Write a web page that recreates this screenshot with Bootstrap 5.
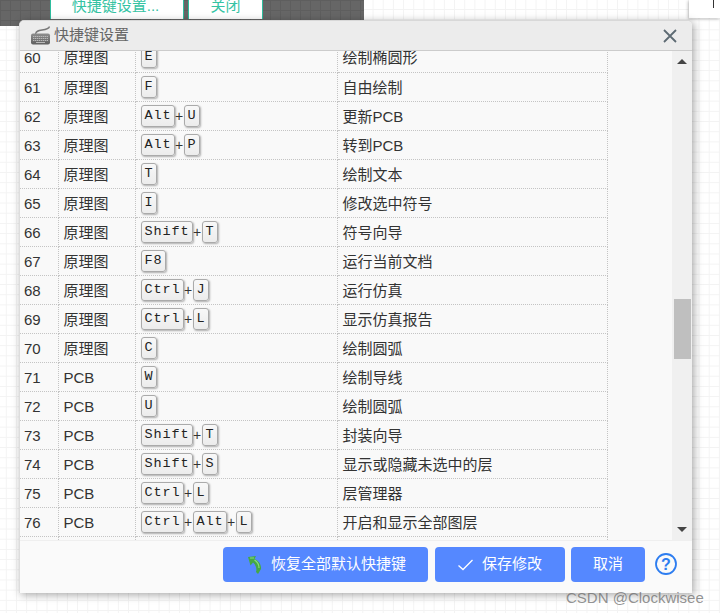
<!DOCTYPE html>
<html lang="zh">
<head>
<meta charset="utf-8">
<title>快捷键设置</title>
<link href="https://cdn.jsdelivr.net/npm/bootstrap@5.3.0/dist/css/bootstrap.min.css" rel="stylesheet">
<style>
html,body{width:720px;height:613px;overflow:hidden;margin:0;}
body{font-family:"Liberation Sans","Noto Sans CJK SC",sans-serif;background-color:#fff;
  background-image:linear-gradient(#f3f3f3 1px,transparent 1px),linear-gradient(90deg,#f3f3f3 1px,transparent 1px);
  background-size:10.2px 10.2px;background-position:5.8px 9px;}
.stage{width:720px;height:613px;position:relative;}
.dark-strip{width:364px;height:26px;background-color:#666;
  background-image:linear-gradient(#5e5e5e 1px,transparent 1px),linear-gradient(90deg,#5e5e5e 1px,transparent 1px);
  background-size:10px 10px;padding-left:50px;gap:4px;align-items:flex-start;}
.strip-tab{height:19px;background:#fff;border-left:1px solid #2ebd9e;border-right:1px solid #2ebd9e;color:#35c3a3;font-size:15px;line-height:11px;overflow:hidden;justify-content:center;}
.tab-one{width:134px;padding-right:3px;}
.tab-two{width:75px;}
.corner-box{position:absolute;left:689px;top:0;width:31px;height:18px;background:#fff;box-shadow:-1px 1px 3px rgba(0,0,0,.25);}
.corner-box i{display:block;width:1px;height:8px;background:#333;margin-left:24px;}
.dialog-win{position:absolute;left:19px;top:20px;width:673px;height:573px;background:#fafafa;border-radius:5px 5px 0 0;border-top:1px solid #d8d8d8;border-left:1px solid #ddd;box-shadow:2px 2px 8px rgba(0,0,0,.35);overflow:hidden;}
.title-bar{height:30px;background:#ececec;border-bottom:1px solid #ccc;padding-left:10px;color:#666;font-size:15px;}
.title-bar .kb-icon{margin-right:3px;}
.title-bar .close-x{margin-left:auto;margin-right:15px;}
.body-zone{height:489px;}
.table-pane{width:652px;overflow:hidden;background:#f9f9f9;}
.key-grid{table-layout:fixed;width:589px;margin:-8px 0 0 -1px;border-collapse:collapse;color:#333;font-size:15px;--bs-table-bg:transparent;}
.key-grid td{height:29px;padding:2px 5px 0;border:1px dotted #c4c4c4;border-top:0;vertical-align:middle;line-height:20px;white-space:nowrap;box-shadow:none;background:transparent;}
.key-grid td:first-child{border-left:0;}
.c-num{width:39px;color:#444;}
.c-kind{width:77px;}
.c-keys{width:202px;}
.k{display:inline-block;box-sizing:border-box;font-family:"Liberation Mono",monospace;font-size:13.5px;letter-spacing:.9px;line-height:20px;height:22px;min-width:16px;padding:0 2px 0 3px;text-align:center;color:#222;background:linear-gradient(#f8f8f8,#ececec);border:1px solid #aaa;border-radius:3px;box-shadow:1px 1px 2px rgba(0,0,0,.3);vertical-align:middle;position:relative;top:-1px;}
.k-plus{display:inline-block;width:9px;text-align:center;font-size:14px;color:#333;vertical-align:middle;position:relative;top:-1px;}
.scroll-rail{width:20px;background:#f0f0f0;flex:none;}
.thumb{width:17px;height:60px;background:#bfbfbf;margin:0 auto 0 2px;}
.arrow-up{width:0;height:0;border:5px solid transparent;border-top:0;border-bottom:5px solid #444;margin:8px auto 0 5px;}
.arrow-down{width:0;height:0;border:5px solid transparent;border-bottom:0;border-top:5px solid #444;margin:0 auto 8px 5px;}
.gap-a{height:235px;}
.foot-bar{height:53px;background:#fafafa;border-top:1px solid #efefef;padding:6px 15px 0 0;justify-content:flex-end;align-items:flex-start;gap:6px;}
.act-btn{height:35px;padding:0;background:#5588ff;border:0;border-radius:4px;color:#fff;font-size:15px;justify-content:center;gap:9px;}
.act-btn:hover{background:#5588ff;color:#fff;}
.btn-w1{width:205px;margin-right:1px;padding-left:3px;}
.btn-w2{width:130px;}
.btn-w3{width:74px;}
.help-mark{margin-left:4px;margin-top:6px;}
.wm{position:absolute;left:566px;top:589px;font-size:15px;color:rgba(100,100,100,.7);line-height:18px;white-space:nowrap;}
</style>
</head>
<body>
<div class="stage">
  <div class="dark-strip d-flex">
    <div class="strip-tab tab-one d-flex">快捷键设置...</div>
    <div class="strip-tab tab-two d-flex">关闭</div>
  </div>
  <div class="corner-box"><i></i></div>

  <div class="dialog-win d-flex flex-column">
    <div class="title-bar d-flex align-items-center">
      <svg class="kb-icon" width="21" height="19" viewBox="0 0 21 19">
        <defs><linearGradient id="kb" x1="0" y1="0" x2="0" y2="1"><stop offset="0" stop-color="#8e8e8e"/><stop offset="1" stop-color="#5f5f5f"/></linearGradient></defs>
        <path d="M19.500 .5C19 3 16 3.500 12 4S6 5 5.500 8" fill="none" stroke="#777" stroke-width="1.300"/>
        <rect x="1" y="7.500" width="19" height="11" rx="2" fill="url(#kb)"/>
        <path d="M3 10.500h15M3 12.500h15M3 14.500h15" stroke="#b9b9b9" stroke-width="1.100" stroke-dasharray="1.400 .6"/>
        <path d="M6 16.500h9" stroke="#b9b9b9" stroke-width="1"/>
      </svg>
      <span>快捷键设置</span>
      <svg class="close-x" width="14" height="14" viewBox="0 0 14 14"><path d="M1 1l12 12M13 1L1 13" stroke="#5d6a73" stroke-width="1.800" fill="none"/></svg>
    </div>

    <div class="body-zone d-flex">
      <div class="table-pane flex-grow-1">
        <table class="key-grid">
          <colgroup><col class="c-num"><col class="c-kind"><col class="c-keys"><col></colgroup>
          <tbody>
          <tr><td>60</td><td>原理图</td><td><kbd class="k">E</kbd></td><td>绘制椭圆形</td></tr>
          <tr><td>61</td><td>原理图</td><td><kbd class="k">F</kbd></td><td>自由绘制</td></tr>
          <tr><td>62</td><td>原理图</td><td><kbd class="k">Alt</kbd><span class="k-plus">+</span><kbd class="k">U</kbd></td><td>更新PCB</td></tr>
          <tr><td>63</td><td>原理图</td><td><kbd class="k">Alt</kbd><span class="k-plus">+</span><kbd class="k">P</kbd></td><td>转到PCB</td></tr>
          <tr><td>64</td><td>原理图</td><td><kbd class="k">T</kbd></td><td>绘制文本</td></tr>
          <tr><td>65</td><td>原理图</td><td><kbd class="k">I</kbd></td><td>修改选中符号</td></tr>
          <tr><td>66</td><td>原理图</td><td><kbd class="k">Shift</kbd><span class="k-plus">+</span><kbd class="k">T</kbd></td><td>符号向导</td></tr>
          <tr><td>67</td><td>原理图</td><td><kbd class="k">F8</kbd></td><td>运行当前文档</td></tr>
          <tr><td>68</td><td>原理图</td><td><kbd class="k">Ctrl</kbd><span class="k-plus">+</span><kbd class="k">J</kbd></td><td>运行仿真</td></tr>
          <tr><td>69</td><td>原理图</td><td><kbd class="k">Ctrl</kbd><span class="k-plus">+</span><kbd class="k">L</kbd></td><td>显示仿真报告</td></tr>
          <tr><td>70</td><td>原理图</td><td><kbd class="k">C</kbd></td><td>绘制圆弧</td></tr>
          <tr><td>71</td><td>PCB</td><td><kbd class="k">W</kbd></td><td>绘制导线</td></tr>
          <tr><td>72</td><td>PCB</td><td><kbd class="k">U</kbd></td><td>绘制圆弧</td></tr>
          <tr><td>73</td><td>PCB</td><td><kbd class="k">Shift</kbd><span class="k-plus">+</span><kbd class="k">T</kbd></td><td>封装向导</td></tr>
          <tr><td>74</td><td>PCB</td><td><kbd class="k">Shift</kbd><span class="k-plus">+</span><kbd class="k">S</kbd></td><td>显示或隐藏未选中的层</td></tr>
          <tr><td>75</td><td>PCB</td><td><kbd class="k">Ctrl</kbd><span class="k-plus">+</span><kbd class="k">L</kbd></td><td>层管理器</td></tr>
          <tr><td>76</td><td>PCB</td><td><kbd class="k">Ctrl</kbd><span class="k-plus">+</span><kbd class="k">Alt</kbd><span class="k-plus">+</span><kbd class="k">L</kbd></td><td>开启和显示全部图层</td></tr>
          <tr><td>&nbsp;</td><td></td><td></td><td></td></tr>
          </tbody>
        </table>
      </div>
      <div class="scroll-rail d-flex flex-column">
        <div class="arrow-up"></div>
        <div class="gap-a"></div>
        <div class="thumb"></div>
        <div class="flex-grow-1"></div>
        <div class="arrow-down"></div>
      </div>
    </div>

    <div class="foot-bar d-flex">
      <button type="button" class="btn act-btn btn-w1 d-flex align-items-center">
        <svg width="14" height="18" viewBox="0 0 14 18"><path d="M0 1L8 0 6.500 3C10 4.500 13.500 8 13 13L10 18 8 16C9 13 8 9 5 6.500L2.500 9.500Z" fill="#45a845"/><path d="M2 2L6 2M6.500 4C9 5.500 11 8 11 12" stroke="#86dd7c" stroke-width="1.200" fill="none"/></svg>
        <span>恢复全部默认快捷键</span>
      </button>
      <button type="button" class="btn act-btn btn-w2 d-flex align-items-center">
        <svg width="15" height="12" viewBox="0 0 15 12"><path d="M.5 6.500l4.500 4L14.500 1" stroke="#fff" stroke-width="1.300" fill="none"/></svg>
        <span>保存修改</span>
      </button>
      <button type="button" class="btn act-btn btn-w3 d-flex align-items-center">取消</button>
      <svg class="help-mark" width="22" height="22" viewBox="0 0 22 22">
        <circle cx="11" cy="11" r="10" fill="none" stroke="#2d7df0" stroke-width="1.800"/>
        <text x="11" y="16.800" text-anchor="middle" font-family="Liberation Sans" font-weight="700" font-size="16" fill="#2d7df0">?</text>
      </svg>
    </div>
  </div>

  <div class="wm">CSDN @Clockwisee</div>
</div>
<script src="https://cdn.jsdelivr.net/npm/bootstrap@5.3.0/dist/js/bootstrap.bundle.min.js"></script>
</body>
</html>
